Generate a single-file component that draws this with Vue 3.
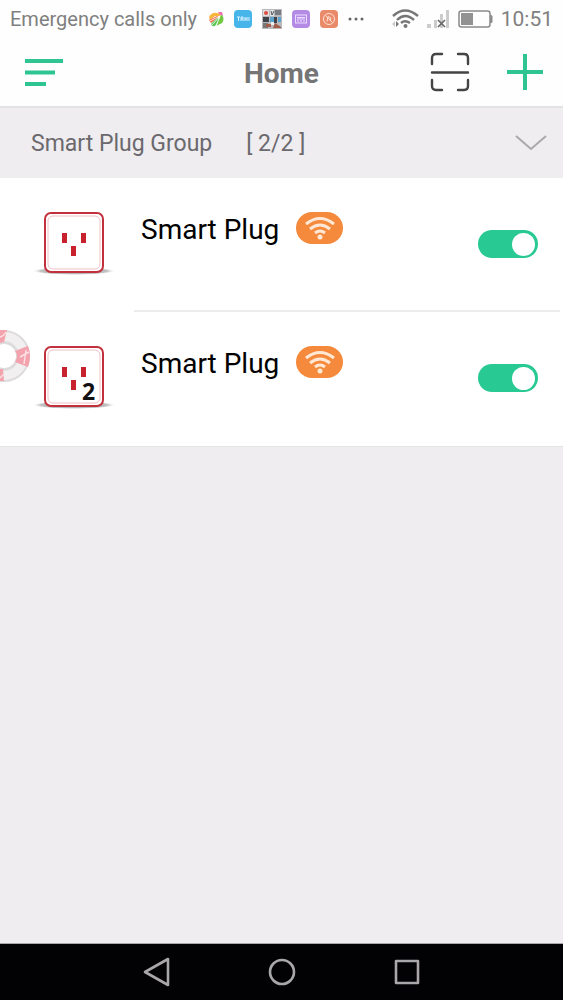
<script setup>
import { ref } from 'vue'

const devices = ref([
  { id: 1, name: 'Smart Plug', badge: '', on: true },
  { id: 2, name: 'Smart Plug', badge: '2', on: true },
])
</script>

<template>
  <div class="screen">
    <div class="status">
      <span class="carrier">Emergency calls only</span>
      <div class="notices" aria-hidden="true">
        <svg width="16" height="16" viewBox="0 0 16 16">
          <path d="M1 6Q4 1 9 2L13 3 12 5 7 5 2 9Z" fill="#f6b53c" />
          <path d="M10 1l4 0 1 4-3-1Z" fill="#ef6fae" />
          <path d="M1 9l8-4 2 1-8 6Z" fill="#f4694c" />
          <path d="M3 13l7-7 1 3-4 6Q4 16 3 13Z" fill="#5cc653" />
          <path d="M12 5l2-1q3 4 0 8l-6 3 3-6Z" fill="#6fc93f" />
          <path d="M2 10L12 5M4 14L12 5M8 15L12 5" stroke="#fff" stroke-width=".8" />
        </svg>
        <svg width="18" height="18" viewBox="0 0 18 18">
          <rect width="18" height="18" rx="4" fill="#47b5ea" />
          <path d="M3 7h3M4.500 7v4M7 11V7h2v4M7 9h2M11 7v4M11 9h2M13 7v4M15 7v4" stroke="#d9f2ff" fill="none" />
        </svg>
        <svg width="20" height="20" viewBox="0 0 20 20">
          <rect width="20" height="20" fill="#b9b9bd" />
          <rect x="1" y="1" width="6" height="6" fill="#e2dcdc" />
          <circle cx="4" cy="4" r="2" fill="#d94c3f" />
          <rect x="8" y="1" width="4" height="6" fill="#dfe4e8" />
          <path d="M9 2l1 4 2-4" stroke="#555" fill="none" />
          <rect x="13" y="1" width="6" height="5" fill="#777b82" />
          <path d="M1 8h6v5H1ZM12 8h3v6h-3Z" fill="#3e4249" />
          <path d="M8 8h4v5H8ZM16 8h3v5h-3Z" fill="#58a4cf" />
          <path d="M1 14h5v5H1Z" fill="#777" />
          <path d="M4 15h5v3H4ZM13 14l6 4v1h-8Z" fill="#a35c48" />
          <path d="M9 13h3v3H9Z" fill="#eee" />
        </svg>
        <svg width="18" height="18" viewBox="0 0 18 18">
          <rect width="18" height="18" rx="4" fill="#b48be4" />
          <rect x="3.500" y="5" width="11" height="8" fill="none" stroke="#eadcff" />
          <path d="M5 7.500h8M5 9h8M5 11h2M8 11h2M11 11h2" stroke="#eadcff" />
        </svg>
        <svg width="18" height="18" viewBox="0 0 18 18">
          <rect width="18" height="18" rx="4" fill="#e98a6a" />
          <circle cx="9" cy="9" r="5.500" fill="none" stroke="#ffe0d4" />
          <path d="M5.500 5.500l7 7M7 11.500l1-5 3 1.500-1 3" stroke="#ffe0d4" fill="none" />
        </svg>
        <svg width="16" height="18" viewBox="0 0 16 18" fill="#666">
          <circle cx="2" cy="9" r="1.500" /><circle cx="8" cy="9" r="1.500" /><circle cx="14" cy="9" r="1.500" />
        </svg>
      </div>
      <div class="system">
        <svg width="28" height="20" viewBox="0 0 28 20" fill="none" stroke="#777">
          <path d="M2 7Q14 -4 27 7M6 11Q14 3 23 11" stroke-width="2.400" />
          <path d="M10 14Q14 10.500 19 14" stroke-width="2.400" />
          <circle cx="14.500" cy="17" r="2" fill="#777" stroke="none" />
          <path d="M4 12v6l-3-3Z" fill="#ccc" stroke="none" />
          <path d="M5 12v6l3-3Z" fill="#777" stroke="none" />
        </svg>
        <svg width="23" height="20" viewBox="0 0 23 20">
          <path d="M0 15h4v4H0ZM7 11h3v8H7ZM13 5h3v14h-3ZM19 1h3v18h-3Z" fill="#ccc" />
          <path d="M11 11l7 7M18 11l-7 7" stroke="#666" stroke-width="1.600" />
        </svg>
        <svg width="35" height="18" viewBox="0 0 35 18">
          <rect x="1" y="1" width="31" height="16" rx="2.500" fill="none" stroke="#8b8b8b" stroke-width="1.500" />
          <rect x="3" y="3" width="12" height="12" fill="#929292" />
          <path d="M32 5h1q1.500 0 1.500 1.500v5q0 1.500-1.500 1.500h-1Z" fill="#8b8b8b" />
        </svg>
        <time class="clock">10:51</time>
      </div>
    </div>

    <header class="bar">
      <button class="icon-btn menu" type="button" aria-label="Menu">
        <svg width="38" height="28" viewBox="0 0 38 28" fill="#2fc593">
          <path d="M0 0h38v4H0ZM0 11.500h30v4H0ZM0 23h21v4H0Z" />
        </svg>
      </button>
      <h1 class="title">Home</h1>
      <div class="actions">
        <button class="icon-btn" type="button" aria-label="Scan code">
          <svg width="40" height="40" viewBox="0 0 40 40" fill="none" stroke="#444" stroke-width="2.400" stroke-linecap="round">
            <path d="M2 12V6Q2 2 6 2H12M28 2h6q4 0 4 4v6M38 28v6q0 4-4 4h-6M12 38H6q-4 0-4-4v-6M2 20.500h36" />
          </svg>
        </button>
        <button class="icon-btn" type="button" aria-label="Add device">
          <svg width="36" height="36" viewBox="0 0 36 36" fill="#2fc593">
            <path d="M16 0h4v16h16v4H20v16h-4V20H0v-4h16Z" />
          </svg>
        </button>
      </div>
    </header>

    <main class="content">
      <button class="group" type="button" aria-expanded="true">
        <span>Smart Plug Group</span>
        <span class="count">[ 2/2 ]</span>
        <svg class="chevron" width="32" height="18" viewBox="0 0 32 18" fill="none" stroke="#a9a8ab" stroke-width="2">
          <path d="M1 2l15 13L31 2" />
        </svg>
      </button>

      <ul class="devices">
        <li v-for="d in devices" :key="d.id" class="device">
          <svg class="plug" width="84" height="68" viewBox="0 1 84 68" aria-hidden="true">
            <defs>
              <radialGradient :id="'shade' + d.id">
                <stop offset="0" stop-color="#777" />
                <stop offset=".8" stop-color="#aaa" stop-opacity=".7" />
                <stop offset="1" stop-color="#fff" stop-opacity="0" />
              </radialGradient>
            </defs>
            <ellipse cx="42" cy="61" rx="42" ry="4" :fill="'url(#shade' + d.id + ')'" />
            <rect x="13" y="3" width="58" height="59" rx="6" fill="#fff" stroke="#c2313b" stroke-width="2" />
            <rect x="16" y="6" width="52" height="53" rx="5" fill="none" stroke="#efc0c5" />
            <path d="M30 23h5v10h-5ZM49 23h5v10h-5ZM39 36h5v10h-5Z" fill="#c9222f" />
            <text v-if="d.badge" class="badge" x="50" y="56">{{ d.badge }}</text>
          </svg>
          <div class="body">
            <label class="name" :for="'power' + d.id">{{ d.name }}</label>
            <span class="wifi" role="img" aria-label="Wi-Fi">
              <svg width="32" height="24" viewBox="0 0 32 24" fill="none" stroke="#ffe9d6" stroke-width="3">
                <path d="M2 8Q16 -3 30 8M6 13Q16 5 26 13M11 17Q16 13 21 17" />
                <circle cx="16" cy="21" r="2.500" fill="#ffe9d6" stroke="none" />
              </svg>
            </span>
            <input :id="'power' + d.id" v-model="d.on" class="toggle" type="checkbox" role="switch" />
          </div>
        </li>
      </ul>

      <button class="help" type="button" aria-label="Help">
        <svg width="30" height="52" viewBox="0 0 30 52" fill="none">
          <circle cx="4" cy="26" r="19" stroke="#dedbdc" stroke-width="14" />
          <circle cx="4" cy="26" r="19.500" stroke="#f1efef" stroke-width="9" />
          <path d="M0 0H7L4 12 0 13ZM20 19L28 16Q32 26 28 37L15 32Q19 26 15 21ZM0 39H3L4 51H0Z" fill="#f3a3ad" />
          <path d="M0 7Q4 6 6 2M20 27l9-5M26 20l-2 14M0 48l4-4" stroke="#fbdfe2" stroke-width="1.500" />
        </svg>
      </button>
    </main>

    <nav class="nav" aria-label="System navigation">
      <button class="icon-btn" type="button" aria-label="Back">
        <svg width="28" height="30" viewBox="0 0 28 30" fill="none" stroke="#a9a7aa" stroke-width="2.600" stroke-linejoin="round">
          <path d="M25 2v26L2 15Z" />
        </svg>
      </button>
      <button class="icon-btn" type="button" aria-label="Home screen">
        <svg width="28" height="28" viewBox="0 0 28 28" fill="none" stroke="#a9a7aa" stroke-width="2.600">
          <circle cx="14" cy="14" r="12" />
        </svg>
      </button>
      <button class="icon-btn" type="button" aria-label="Recent apps">
        <svg width="28" height="28" viewBox="0 0 28 28" fill="none" stroke="#a9a7aa" stroke-width="2.600" stroke-linejoin="round">
          <rect x="3" y="3" width="22" height="22" />
        </svg>
      </button>
    </nav>
  </div>
</template>

<style>
body {
  margin: 0;
}
</style>

<style scoped>
.screen {
  display: flex;
  flex-direction: column;
  min-height: 100vh;
  background: #efedf0;
  font-family: Roboto, "Noto Sans", sans-serif;
  color: #000;
}
svg {
  display: block;
  flex: none;
}
button {
  border: 0;
  background: none;
  padding: 0;
  font: inherit;
  color: inherit;
  cursor: pointer;
}
.status {
  display: flex;
  align-items: center;
  height: 38px;
  padding: 0 10px;
  background: #fefefe;
  color: #808080;
  font-size: 20px;
  white-space: nowrap;
}
.notices {
  display: flex;
  align-items: center;
  gap: 10px;
  margin-left: 11px;
}
.system {
  display: flex;
  align-items: center;
  gap: 8px;
  margin-left: auto;
}
.clock {
  font-size: 21px;
}
.bar {
  display: grid;
  grid-template-columns: 1fr auto 1fr;
  align-items: center;
  height: 68px;
  padding: 0 20px;
  background: #fefefe;
  border-bottom: 2px solid #e3e2e4;
}
.icon-btn {
  display: block;
  justify-self: start;
}
.menu {
  padding: 2px 0 0 5px;
}
.title {
  margin: 0;
  padding-top: 4px;
  font-size: 28px;
  font-weight: 700;
  line-height: 36px;
  color: #757575;
}
.actions {
  display: flex;
  align-items: center;
  gap: 37px;
  justify-self: end;
}
.content {
  position: relative;
  flex: 1;
}
.group {
  display: flex;
  align-items: center;
  width: 100%;
  height: 70px;
  padding: 0 16px 0 31px;
  color: #6b696d;
  font-size: 23px;
}
.count {
  margin-left: 34px;
}
.chevron {
  margin-left: auto;
}
.devices {
  list-style: none;
  margin: 0;
  padding: 0;
  background: #fff;
  border-bottom: 1px solid #e6e4e7;
}
.device {
  display: flex;
  align-items: center;
  height: 134px;
  padding: 0 3px 0 32px;
}
.badge {
  font-family: "Open Sans", sans-serif;
  font-size: 23px;
  font-weight: 700;
  fill: #111;
}
.body {
  display: flex;
  align-items: center;
  flex: 1;
  box-sizing: border-box;
  height: 134px;
  margin-left: 18px;
  padding: 0 22px 0 7px;
  border-bottom: 2px solid #ececec;
}
.device:last-child .body {
  border-bottom-color: transparent;
}
.name {
  align-self: flex-start;
  margin-top: 34px;
  font-size: 28px;
  line-height: 36px;
}
.wifi {
  display: flex;
  align-items: center;
  justify-content: center;
  align-self: flex-start;
  width: 47px;
  height: 32px;
  margin: 34px 0 0 17px;
  border-radius: 16px;
  background: #f58a3c;
}
.toggle {
  appearance: none;
  display: flex;
  align-items: center;
  justify-content: flex-end;
  box-sizing: border-box;
  width: 60px;
  height: 28px;
  margin: 0 0 0 auto;
  padding: 0 3px;
  border-radius: 14px;
  background: #28c993;
  cursor: pointer;
}
.toggle::before {
  content: "";
  width: 23px;
  height: 23px;
  border-radius: 50%;
  background: #fff;
}
.toggle:not(:checked) {
  justify-content: flex-start;
  background: #c8c8c8;
}
.help {
  position: absolute;
  left: 0;
  top: 222px;
}
.nav {
  display: flex;
  align-items: center;
  justify-content: center;
  gap: 97px;
  height: 56px;
  background: #020104;
  border-top: 1px solid #aaa8ab;
}
</style>
